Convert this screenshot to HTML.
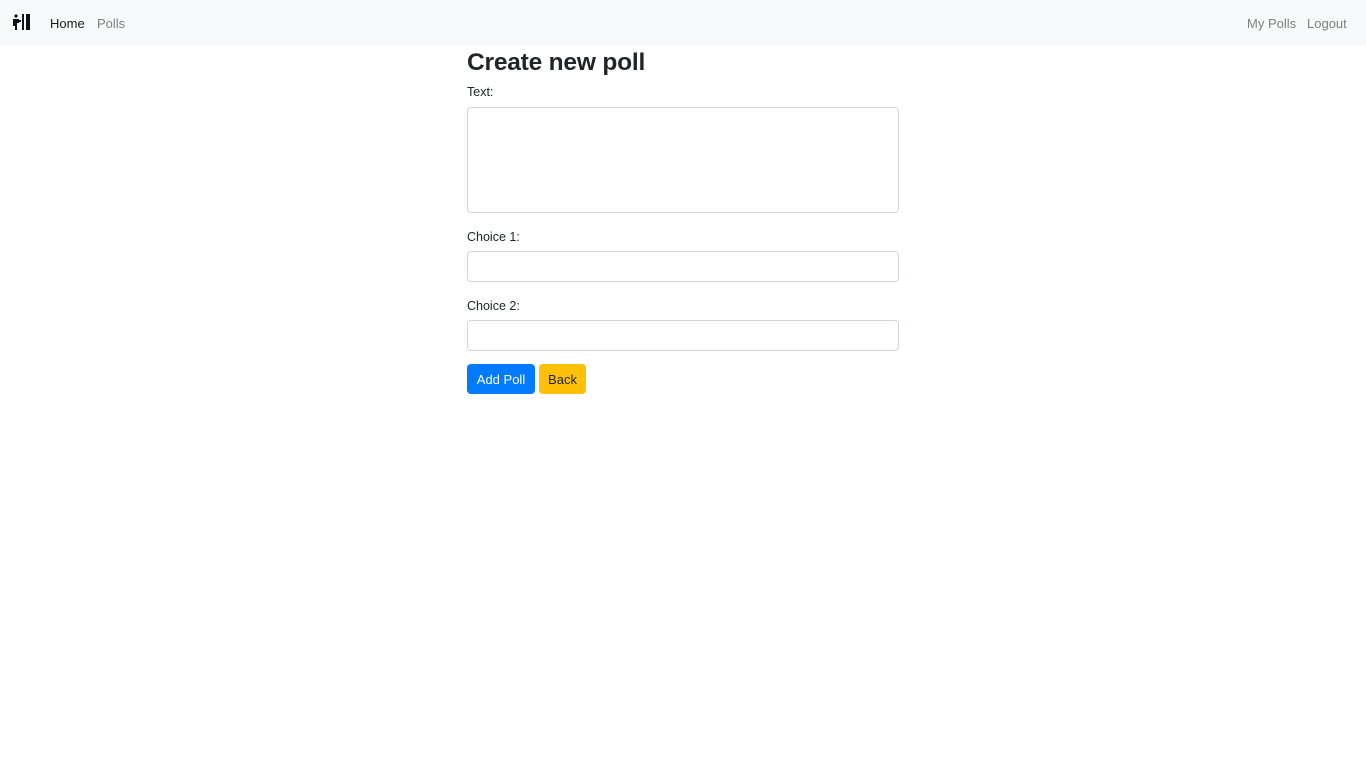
<!DOCTYPE html>
<html><head><style>
body{margin:0;font-family:"Liberation Sans",sans-serif;background:#fff;color:#212529;}
.nav{height:45px;background:#f8f9fa;position:relative;font-size:13px;}
.nav a{position:absolute;top:16px;color:rgba(0,0,0,.5);text-decoration:none;}
.logo{position:absolute;left:13px;top:14px;}
.wrap{position:absolute;left:467px;top:45px;width:432px;}
h1{margin:0;position:absolute;top:4px;font-size:24.5px;font-weight:bold;letter-spacing:-0.2px;}
label{position:absolute;font-size:12.5px;}
.in{position:absolute;left:0;width:430px;border:1px solid #ced4da;border-radius:4px;background:#fff;}
.btn{position:absolute;top:319px;height:30px;line-height:31px;border-radius:4px;font-size:13px;text-align:center;}
</style></head><body>
<div class="nav">
<svg class="logo" width="18" height="16" viewBox="0 0 18 16"><rect x="13" y="0" width="4" height="16" fill="#111"/><rect x="9" y="0" width="2" height="16" fill="#111"/><circle cx="3" cy="2" r="1.6" fill="#111"/><path d="M0 5h6v4H4v7H2v-4H0z" fill="#111"/><rect x="5" y="6" width="3" height="2" fill="#111"/></svg>
<a style="left:50px;color:rgba(0,0,0,.9)">Home</a>
<a style="left:97px">Polls</a>
<a style="left:1247px">My Polls</a>
<a style="left:1307px">Logout</a>
</div>
<div class="wrap">
<h1>Create new poll</h1>
<label style="top:40px">Text:</label>
<div class="in" style="top:62px;height:104px"></div>
<label style="top:185px">Choice 1:</label>
<div class="in" style="top:206px;height:29px"></div>
<label style="top:254px">Choice 2:</label>
<div class="in" style="top:275px;height:29px"></div>
<div class="btn" style="left:0;width:68px;background:#007bff;color:#fff">Add Poll</div>
<div class="btn" style="left:72px;width:47px;background:#ffc107;color:#212529">Back</div>
</div>
</body></html>
